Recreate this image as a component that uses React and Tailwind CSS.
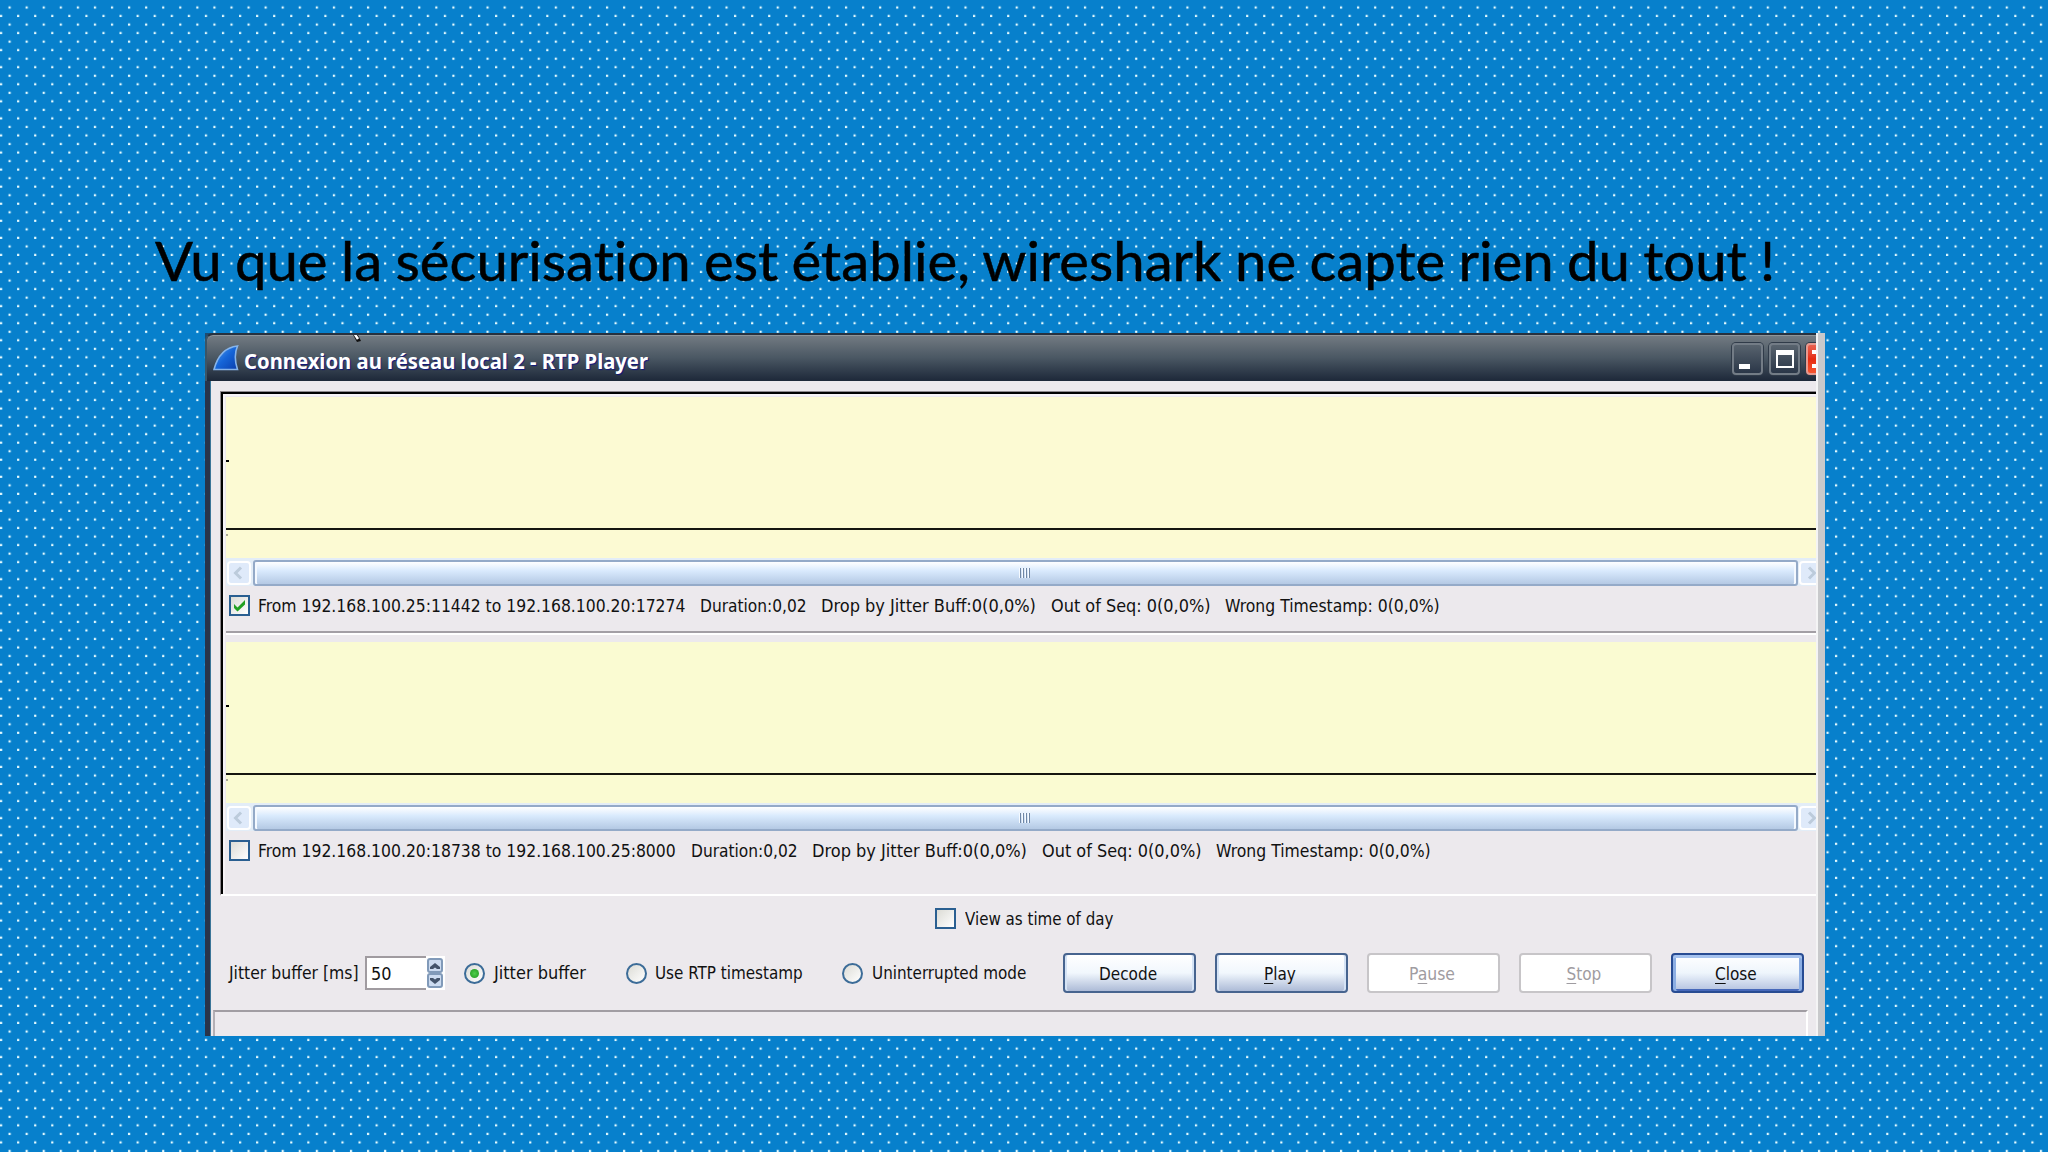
import { useLayoutEffect, useRef, useState } from "react";

const streams = [
  {
    checked: true,
    color: "bg-[#fcfad3]",
    parts: [
      { text: "From 192.168.100.25:11442 to 192.168.100.20:17274", width: 427 },
      { text: "Duration:0,02", width: 107 },
      { text: "Drop by Jitter Buff:0(0,0%)", width: 215 },
      { text: "Out of Seq: 0(0,0%)", width: 160 },
      { text: "Wrong Timestamp: 0(0,0%)", width: 215 },
    ],
  },
  {
    checked: false,
    color: "bg-[#fafbd2]",
    parts: [
      { text: "From 192.168.100.20:18738 to 192.168.100.25:8000", width: 418 },
      { text: "Duration:0,02", width: 107 },
      { text: "Drop by Jitter Buff:0(0,0%)", width: 215 },
      { text: "Out of Seq: 0(0,0%)", width: 160 },
      { text: "Wrong Timestamp: 0(0,0%)", width: 215 },
    ],
  },
];

// Squeezes or stretches a single line of text to the given width
const FitText = ({ width, className = "", children }) => {
  const ref = useRef(null);
  const [scale, setScale] = useState(1);

  useLayoutEffect(() => {
    setScale(width / ref.current.offsetWidth);
  }, [width]);

  return (
    <span className={`block shrink-0 whitespace-nowrap ${className}`} style={{ width }}>
      <span ref={ref} className="inline-block origin-left" style={{ transform: `scaleX(${scale})` }}>
        {children}
      </span>
    </span>
  );
};

const Dots = () => (
  <svg className="absolute inset-0 h-full w-full" aria-hidden="true">
    <defs>
      <pattern id="dots" width="17.07" height="17.067" patternUnits="userSpaceOnUse">
        <rect x="8.5" y="6.4" width="2.2" height="2.2" fill="#e6fbff" />
        <rect x="0" y="14.9" width="2.2" height="2.2" fill="#e6fbff" />
      </pattern>
    </defs>
    <rect width="100%" height="100%" fill="url(#dots)" />
  </svg>
);

const Fin = () => (
  <svg className="h-[26px] w-[26px] shrink-0" viewBox="0 0 26 26">
    <defs>
      <linearGradient id="fin" x1="0" y1="0" x2="1" y2="1">
        <stop offset="0" stopColor="#5ba4f0" />
        <stop offset="0.5" stopColor="#1565d8" />
        <stop offset="1" stopColor="#0a3fae" />
      </linearGradient>
    </defs>
    <path d="M1 24.5C4 13 11 2.500 24.500 1C21.500 8 22 17 24.500 24.500Z" fill="url(#fin)" stroke="#86b4ea" strokeWidth="1.600" />
  </svg>
);

const CheckBox = ({ checked }) => (
  <span className="flex h-[21px] w-[21px] shrink-0 items-center justify-center border-2 border-[#2a5f91] bg-linear-to-br from-[#dcdcd6] to-white">
    {checked && (
      <svg className="h-[13px] w-[13px]" viewBox="0 0 13 13">
        <path d="M1 5L4.500 8.500L12 1V5.500L4.500 12.500L1 9Z" fill="#22a122" />
      </svg>
    )}
  </span>
);

const Radio = ({ checked }) => (
  <span className="flex h-[21px] w-[21px] shrink-0 items-center justify-center rounded-full border-2 border-[#3c6c98] bg-linear-to-br from-[#dcdcd6] to-white">
    {checked && <span className="h-[9px] w-[9px] rounded-full bg-radial from-[#4fce4a] to-[#1c961c]" />}
  </span>
);

const Chevron = ({ flip }) => (
  <svg className={`h-[14px] w-[10px] ${flip ? "rotate-180" : ""}`} viewBox="0 0 10 14">
    <path d="M8 1.500L2.500 7L8 12.500" fill="none" stroke="#bccbdb" strokeWidth="3" />
  </svg>
);

const ScrollBar = () => (
  <div className="flex h-[28px] overflow-hidden bg-[#e3edf7] pt-[2px]">
    <div className="mt-px ml-px flex h-[24px] w-[24px] shrink-0 items-center justify-center rounded-sm border-2 border-white bg-[#dfeafa] pr-[3px]">
      <Chevron />
    </div>
    <div className="ml-[2px] flex h-[26px] w-[1545px] shrink-0 items-center justify-center rounded-[3px] border-2 border-[#94aac8] bg-linear-to-b from-white via-[#d9eafd] via-40% to-[#b4c9e4] shadow-[inset_2px_0_0_#f4f9ff,inset_-2px_0_0_#f4f9ff]">
      <div className="-ml-px flex h-[10px] gap-[2px]">
        {[0, 1, 2, 3].map((i) => (
          <span key={i} className="w-px bg-[#7087a5] shadow-[-1px_0_0_#f5faff]" />
        ))}
      </div>
    </div>
    <div className="mt-px ml-px flex h-[24px] w-[24px] shrink-0 items-center rounded-sm border-2 border-white bg-[#dfeafa] pl-[6px]">
      <Chevron flip />
    </div>
  </div>
);

const Stream = ({ stream }) => (
  <div>
    <div className={`h-[161px] pt-[63px] ${stream.color}`}>
      <div className="h-[2px] w-[3px] bg-black" />
      <div className="mt-[66px] h-[2px] bg-[#15150f]" />
      <div className="mt-[4px] h-[2px] w-[2px] bg-[#aaa994]" />
    </div>
    <ScrollBar />
    <div className="flex h-[45px] pt-[9px] pl-[3px]">
      <CheckBox checked={stream.checked} />
      <div className="ml-[8px] flex gap-[14.5px] leading-[22px]">
        {stream.parts.map((part) => (
          <FitText key={part.text} width={part.width}>{part.text}</FitText>
        ))}
      </div>
    </div>
  </div>
);

const Button = ({ hotkey, before = "", after, width, kind = "normal" }) => {
  const kinds = {
    normal: "border-2 border-[#47648f] bg-linear-to-b from-white via-[#f1f7fd] via-50% to-[#adbbd7] shadow-[inset_2px_0_0_#d5e3f5,inset_-2px_0_0_#d5e3f5]",
    disabled: "border-2 border-[#c7c5c8] bg-white text-[#9f9ca1]",
    focused: "border-2 border-[#284c93] bg-linear-to-b from-white via-[#eef5fc] via-50% to-[#b3c1df] shadow-[inset_0_3px_0_#a5c2ee,inset_3px_0_0_#8caee3,inset_-3px_0_0_#8caee3,inset_0_-2px_0_#4668ba]",
  };
  return (
    <button className={`flex h-[40px] w-[133px] shrink-0 items-center justify-center rounded-[4px] pt-[3px] pr-[3px] ${kinds[kind]}`}>
      <FitText width={width} className="text-left">
        {before}
        {hotkey && <span className="underline underline-offset-[3px]">{hotkey}</span>}
        {after}
      </FitText>
    </button>
  );
};

const TitleBar = () => (
  <div className="relative flex h-[48px] overflow-hidden rounded-tl-lg border-t-2 border-t-[#27323f] border-l-2 border-l-[#3b5566] bg-linear-to-b from-[#747c83] via-[#4a5763] via-50% to-[#1d2839] pt-[10px] pl-[6px] shadow-[inset_0_1px_0_#8f969b]">
    <Fin />
    <FitText width={404} className="mt-[3px] ml-[5px] h-[28px] font-['Noto_Sans'] text-[21px] leading-[26px] font-bold text-white [text-shadow:1px_1px_1px_#10147c]">
      Connexion au réseau local 2 - RTP Player
    </FitText>
    <div className="-mt-[2px] ml-[1084px] flex shrink-0 gap-[6px]">
      <span className="flex h-[32px] w-[31px] items-end rounded-[4px] border-2 border-[#737c86] bg-linear-to-b from-[#58636e] to-[#2b3748] pb-[4px] pl-[5px] shadow-[0_0_0_1px_#303b49]">
        <span className="h-[5px] w-[11px] bg-white" />
      </span>
      <span className="flex h-[32px] w-[31px] items-center justify-center rounded-[4px] border-2 border-[#737c86] bg-linear-to-b from-[#58636e] to-[#2b3748] shadow-[0_0_0_1px_#303b49]">
        <span className="h-[18px] w-[18px] border-2 border-t-[5px] border-white" />
      </span>
      <span className="flex h-[32px] w-[31px] shrink-0 items-center rounded-[4px] border-2 border-[#e79a8f] bg-linear-to-b from-[#e8604e] via-[#e52a10] to-[#f5542f] pl-[4px] shadow-[0_0_0_1px_#303b49]">
        <svg className="h-[18px] w-[20px] shrink-0" viewBox="0 0 20 18">
          <path d="M0 2H5L15 16H20M0 16H5L15 2H20" fill="none" stroke="#fff" strokeWidth="4" />
        </svg>
      </span>
    </div>
    {/* tail of the mouse pointer */}
    <svg className="absolute -top-[2px] left-[143px] h-[10px] w-[14px]" viewBox="0 0 14 10">
      <path d="M2 0H7L11 8L7 9Z" fill="#111" />
      <path d="M4 0L8 6" stroke="#fff" strokeWidth="2.500" />
    </svg>
  </div>
);

const Spinner = () => (
  <div className="flex h-[34px] w-[80px] bg-white">
    <div className="w-[61px] border-2 border-r-0 border-[#a09ba0] pt-[5px] pl-[4px] leading-[22px]">
      <FitText width={20}>50</FitText>
    </div>
    <div className="flex w-[16px] flex-col pt-[2px]">
      {[false, true].map((down) => (
        <span key={String(down)} className="ml-px flex h-[15px] w-[16px] items-center justify-center rounded-[3px] border-2 border-[#819ab9] bg-[#ccdbf0]">
          <svg className={`h-[6px] w-[10px] ${down ? "rotate-180" : ""}`} viewBox="0 0 10 6">
            <path d="M5 0L10 4V6H7L5 4.500L3 6H0V4Z" fill="#43536b" />
          </svg>
        </span>
      ))}
    </div>
  </div>
);

export default function App() {
  return (
    <div className="relative h-[1152px] w-[2048px] overflow-hidden bg-[#0780cc]">
      <Dots />
      <div className="relative pt-[220px] font-['DejaVu_Sans_Condensed','DejaVu_Sans',sans-serif] text-[17px] text-[#111]">
        <h1 className="h-[113px] pl-[155px] font-[Lato,sans-serif] text-[55px] leading-[80px] text-black [font-variant-ligatures:none] [-webkit-text-stroke:0.5px_black] [word-spacing:-1px]">
          <FitText width={1620}>Vu que la sécurisation est établie, wireshark ne capte rien du tout !</FitText>
        </h1>

        <div className="ml-[205px] flex h-[703px] w-[1620px] bg-[#c8c9cb]">
          <div className="flex w-[1611px] flex-col overflow-hidden bg-[#1d4b70]">
            <TitleBar />
            <div className="flex-1 border-l-[5px] border-[#293449] bg-[#ece9ed] pt-[10px] shadow-[inset_1px_0_0_#3b7598]">
              <div className="ml-[10px] h-[505px] border-t border-l border-b-2 border-t-[#8d898e] border-l-[#8d898e] border-b-white">
                <div className="h-full border-t-2 border-l-2 border-black pt-[3px] pl-[3px] shadow-[inset_2px_2px_0_#f6f3f6]">
                  <Stream stream={streams[0]} />
                  <div className="mb-[7px] h-[4px] border-t-2 border-b-2 border-t-[#a39fa5] border-b-white" />
                  <Stream stream={streams[1]} />
                </div>
              </div>

              <div className="mt-[12px] ml-[725px] flex h-[21px] items-center">
                <CheckBox />
                <FitText width={148} className="mt-[2px] ml-[9px]">View as time of day</FitText>
              </div>

              <div className="mt-[24px] ml-[19px] flex h-[40px] items-center">
                <FitText width={130} className="mt-[2px]">Jitter buffer [ms]</FitText>
                <div className="ml-[6px]"><Spinner /></div>
                <div className="ml-[19px] flex items-center gap-[9px]">
                  <Radio checked />
                  <FitText width={92} className="mt-[2px]">Jitter buffer</FitText>
                </div>
                <div className="ml-[40px] flex items-center gap-[8px]">
                  <Radio />
                  <FitText width={148} className="mt-[2px]">Use RTP timestamp</FitText>
                </div>
                <div className="ml-[39px] flex items-center gap-[9px]">
                  <Radio />
                  <FitText width={154} className="mt-[2px]">Uninterrupted mode</FitText>
                </div>
                <div className="ml-[37px] flex gap-[19px]">
                  <Button after="Decode" width={58} />
                  <Button hotkey="P" after="lay" width={32} />
                  <Button before="P" hotkey="a" after="use" width={46} kind="disabled" />
                  <Button hotkey="S" after="top" width={35} kind="disabled" />
                  <Button hotkey="C" after="lose" width={42} kind="focused" />
                </div>
              </div>

              <div className="mt-[17px] ml-[3px] h-[26px] w-[1595px] border-t-2 border-l-2 border-r-2 border-t-[#a19da3] border-l-[#b3afb5] border-r-white" />
            </div>
          </div>
          <div className="w-[2px] bg-[#f4f4f5]" />
        </div>
      </div>
    </div>
  );
}
